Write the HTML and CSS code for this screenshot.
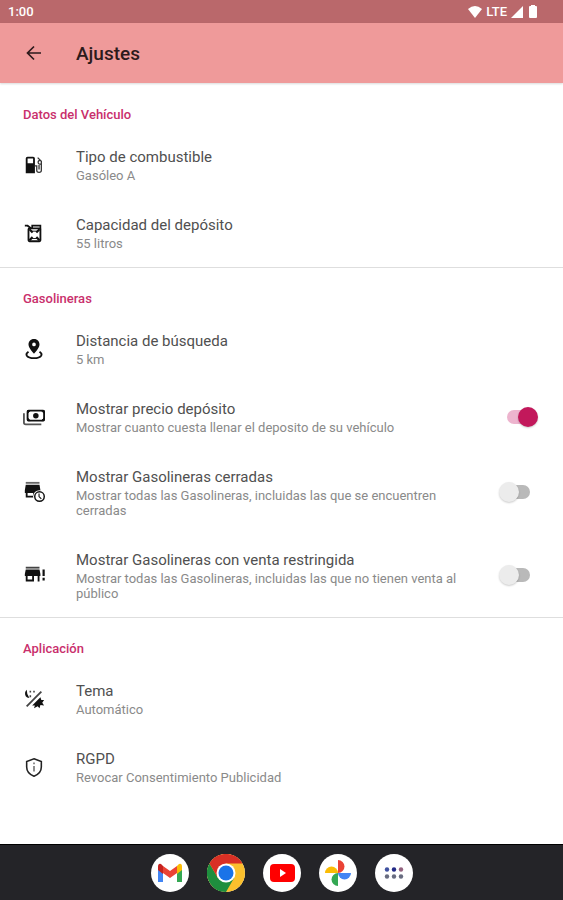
FILE: index.html
```html
<!DOCTYPE html>
<html lang="es">
<head>
    <meta charset="utf-8">
    <meta name="viewport" content="width=device-width, initial-scale=1">
    <title>Ajustes</title>
    <link rel="stylesheet" href="styles.css">
</head>
<body>
    <div class="status-bar">
        <span class="clock">1:00</span>
        <div class="status-icons">
            <svg width="14" height="12" viewBox="0 0 14 12"><path d="M0 3Q7-3 14 3L7 12Z"/></svg>
            <span>LTE</span>
            <svg width="12" height="12" viewBox="0 0 12 12"><path d="M12 0V12H0Z"/></svg>
            <svg class="battery" width="8" height="13" viewBox="0 0 8 13"><path d="M2 0H6V1H7Q8 1 8 2V12Q8 13 7 13H1Q0 13 0 12V2Q0 1 1 1H2Z"/></svg>
        </div>
    </div>
    <header class="app-bar">
        <button class="back" type="button" aria-label="Atrás">
            <svg width="16" height="16" viewBox="0 0 16 16"><path d="M15 8H2M8 1.500L1.500 8L8 14.500" fill="none" stroke="#2d1a1c" stroke-width="1.700"/></svg>
        </button>
        <h1>Ajustes</h1>
    </header>

    <main>
        <section>
            <h2>Datos del Vehículo</h2>
            <button class="row" type="button">
                <svg class="icon" viewBox="0 0 24 24">
                    <path fill-rule="evenodd" d="M5 3H11Q13 3 13 5V21H3V5Q3 3 5 3ZM5 5V10H11V5Z"/>
                    <path d="M13 13H15V18Q15 20 17.500 20Q20 20 20 18V8L16 4M20 11H18Q16.500 11 16.500 9Q16.500 7 19 7M17.500 12V17" fill="none" stroke="#333" stroke-width="1.400"/>
                </svg>
                <span class="text">
                    <span class="title">Tipo de combustible</span>
                    <span class="summary">Gasóleo A</span>
                </span>
            </button>
            <button class="row" type="button">
                <svg class="icon" viewBox="0 0 24 24">
                    <path d="M2 4H5L9 7" fill="none" stroke="#111" stroke-width="2"/>
                    <path d="M10 7V4H19V8" fill="none" stroke="#111" stroke-width="1.800"/>
                    <rect x="6" y="7" width="13" height="14" rx="1" fill="none" stroke="#111" stroke-width="2"/>
                    <path d="M7 8L10.500 11.500M18 8L14.500 11.500M7 20L10.500 16.500M18 20L14.500 16.500" stroke="#111" stroke-width="2.400"/>
                    <path d="M10 10H15M10 18H15" stroke="#111"/>
                </svg>
                <span class="text">
                    <span class="title">Capacidad del depósito</span>
                    <span class="summary">55 litros</span>
                </span>
            </button>
        </section>

        <section>
            <h2>Gasolineras</h2>
            <button class="row" type="button">
                <svg class="icon" viewBox="0 0 24 24">
                    <path fill-rule="evenodd" d="M12 1C8 1 6 4 6 7C6 11 12 17 12 17C12 17 18 11 18 7C18 4 16 1 12 1ZM12 5A2 2 0 1 1 12 9A2 2 0 1 1 12 5Z"/>
                    <path d="M6 15Q3 17 4 19Q6 22 12 22Q18 22 20 19Q21 17 18 15" fill="none" stroke="#111" stroke-width="2"/>
                </svg>
                <span class="text">
                    <span class="title">Distancia de búsqueda</span>
                    <span class="summary">5 km</span>
                </span>
            </button>
            <label class="row">
                <svg class="icon" viewBox="0 0 24 24">
                    <path d="M1 8V18Q1 20 3 20H20" fill="none" stroke="#555" stroke-width="2"/>
                    <rect x="5" y="5" width="18" height="11" rx="1" fill="none" stroke="#111" stroke-width="2"/>
                    <path d="M5 5H8L5 8ZM23 5H20L23 8ZM5 16H8L5 13ZM23 16H20L23 13Z" stroke="#111"/>
                    <circle cx="14" cy="10.500" r="3"/>
                </svg>
                <span class="text">
                    <span class="title">Mostrar precio depósito</span>
                    <span class="summary">Mostrar cuanto cuesta llenar el deposito de su vehículo</span>
                </span>
                <input class="switch" type="checkbox" checked>
            </label>
            <label class="row">
                <svg class="icon" viewBox="0 0 24 24">
                    <path d="M3 2H18" stroke="#666" stroke-width="2"/>
                    <path fill-rule="evenodd" d="M3 4H18L19 10V13H18V18H3V13H2V10ZM5 13V16H11V13Z"/>
                    <circle cx="18" cy="17" r="7" fill="#fff"/>
                    <circle cx="18" cy="17" r="5.200" fill="none" stroke="#111" stroke-width="1.600"/>
                    <path d="M17.500 13.500V17L20 19.500" fill="none" stroke="#111" stroke-width="1.200"/>
                </svg>
                <span class="text">
                    <span class="title">Mostrar Gasolineras cerradas</span>
                    <span class="summary">Mostrar todas las Gasolineras, incluidas las que se encuentren cerradas</span>
                </span>
                <input class="switch" type="checkbox">
            </label>
            <label class="row">
                <svg class="icon" viewBox="0 0 24 24">
                    <path d="M3 4H18" stroke="#444" stroke-width="2"/>
                    <path fill-rule="evenodd" d="M3 6H18L19 11V13H18V19H16V13H12V19H3V13H2V11ZM5 13V17H10V13Z"/>
                    <path d="M22.500 6V13M22.500 15V18" stroke="#111" stroke-width="2.400"/>
                </svg>
                <span class="text">
                    <span class="title">Mostrar Gasolineras con venta restringida</span>
                    <span class="summary">Mostrar todas las Gasolineras, incluidas las que no tienen venta al público</span>
                </span>
                <input class="switch" type="checkbox">
            </label>
        </section>

        <section>
            <h2>Aplicación</h2>
            <button class="row" type="button">
                <svg class="icon" viewBox="0 0 24 24">
                    <path d="M4 20L20 4" stroke="#444" stroke-width="2"/>
                    <path d="M4 2Q1 5 3 9Q4 11 7 11Q4 7 4 2Z"/>
                    <path d="M8 3V5M12 3V5M8 8V10" stroke="#444" stroke-width="1.700"/>
                    <path d="M10 19L19 10L20 13L23 13L21 16L23 19L19 18.500L18 22L16 20L12 22L13 19Z"/>
                </svg>
                <span class="text">
                    <span class="title">Tema</span>
                    <span class="summary">Automático</span>
                </span>
            </button>
            <button class="row" type="button">
                <svg class="icon" viewBox="0 0 24 24">
                    <path d="M12 3L20 6V12Q20 19 12 22Q4 19 4 12V6Z" fill="none" stroke="#222" stroke-width="1.700"/>
                    <path d="M12 7V9M12 11V17" stroke="#777" stroke-width="1.800"/>
                </svg>
                <span class="text">
                    <span class="title">RGPD</span>
                    <span class="summary">Revocar Consentimiento Publicidad</span>
                </span>
            </button>
        </section>
    </main>

    <nav class="dock">
        <button type="button" aria-label="Gmail">
            <svg viewBox="0 0 38 38">
                <path d="M7 13V28H12V17Z" fill="#4285f4"/>
                <path d="M31 13V28H26V17Z" fill="#34a853"/>
                <path d="M26 12L28 10Q31 9 31 13V16L26 20Z" fill="#fbbc04"/>
                <path d="M12 12L10 10Q7 9 7 13V16L12 20Z" fill="#c5221f"/>
                <path d="M12 12L19 17L26 12V19L19 24L12 19Z" fill="#ea4335"/>
            </svg>
        </button>
        <button type="button" aria-label="Chrome">
            <svg viewBox="0 0 38 38">
                <circle cx="19" cy="19" r="19" fill="#fbc02d"/>
                <path d="M19 19L10.800 23.700L2.500 9.500A19 19 0 0 0 19 38L27.200 23.700Z" fill="#1e8e3e"/>
                <path d="M2.500 9.500A19 19 0 0 1 35.500 9.500H19V19L10.800 23.700Z" fill="#d93025"/>
                <circle cx="19" cy="19" r="9.500" fill="#fff"/>
                <circle cx="19" cy="19" r="7.500" fill="#1a73e8"/>
            </svg>
        </button>
        <button type="button" aria-label="YouTube">
            <svg viewBox="0 0 38 38">
                <rect x="7" y="10" width="25" height="18" rx="4" fill="#f00"/>
                <path d="M17 15L23 19L17 23Z" fill="#fff"/>
            </svg>
        </button>
        <button type="button" aria-label="Fotos">
            <svg viewBox="0 0 38 38">
                <path d="M19 19V6A6.500 6.500 0 0 1 19 19Z" fill="#ea4335"/>
                <path d="M19 19H32A6.500 6.500 0 0 1 19 19Z" fill="#4285f4"/>
                <path d="M19 19V32A6.500 6.500 0 0 1 19 19Z" fill="#34a853"/>
                <path d="M19 19H6A6.500 6.500 0 0 1 19 19Z" fill="#fbbc04"/>
            </svg>
        </button>
        <button type="button" aria-label="Aplicaciones">
            <svg viewBox="0 0 38 38">
                <circle cx="12" cy="15.500" r="2.200" fill="#3f51a0"/>
                <circle cx="19" cy="15.500" r="2.200" fill="#232a86"/>
                <circle cx="26" cy="15.500" r="2.200" fill="#94637f"/>
                <circle cx="12" cy="22.500" r="2.200" fill="#686c80"/>
                <circle cx="19" cy="22.500" r="2.200" fill="#686c80"/>
                <circle cx="26" cy="22.500" r="2.200" fill="#686c80"/>
            </svg>
        </button>
    </nav>
</body>
</html>
```
FILE: styles.css
```css
* {
    box-sizing: border-box;
}
body {
    margin: 0;
    min-height: 100vh;
    display: flex;
    flex-direction: column;
    background-color: #fff;
    font-family: Roboto, "Liberation Sans", sans-serif;
}
button {
    border: none;
    padding: 0;
    background: none;
    font: inherit;
    cursor: pointer;
}
.status-bar {
    display: flex;
    justify-content: space-between;
    align-items: center;
    height: 23px;
    padding: 0 26px 0 8px;
    background-color: #ba686b;
    color: #fff;
    font-size: 13px;
    font-weight: 500;
}
.status-icons {
    display: flex;
    align-items: center;
    gap: 4px;
}
.status-icons svg {
    fill: #fff;
}
.battery {
    margin-left: 2px;
}
.app-bar {
    display: flex;
    align-items: center;
    height: 60px;
    padding-left: 24px;
    background-color: #ef9a9a;
    box-shadow: 0 1px 2px rgba(0, 0, 0, 0.15);
}
.back {
    display: flex;
    justify-content: center;
    width: 20px;
    margin-right: 32px;
}
h1 {
    margin: 0;
    font-size: 19px;
    font-weight: 500;
    color: #2d1a1c;
}
main {
    flex: 1;
}
section + section {
    border-top: 1px solid #dedede;
}
h2 {
    margin: 0;
    padding: 24px 23px 8px;
    font-size: 13px;
    line-height: 16px;
    font-weight: 500;
    color: #c92f6c;
}
section + section h2 {
    padding-top: 23px;
}
.row {
    display: flex;
    align-items: center;
    width: 100%;
    padding: 15px 25px 16px 23px;
    text-align: left;
    cursor: pointer;
}
.icon {
    flex: none;
    width: 22px;
    height: 22px;
    margin-right: 31px;
    fill: #111;
}
.text {
    flex: 1;
}
.title,
.summary {
    display: block;
}
.title {
    font-size: 15px;
    line-height: 22px;
    color: #505050;
}
.summary {
    font-size: 13px;
    line-height: 15px;
    color: #8a8a8a;
}
.switch {
    appearance: none;
    flex: none;
    position: relative;
    width: 39px;
    height: 20px;
    margin: 0 0 0 19px;
    cursor: pointer;
}
.switch::before {
    content: "";
    position: absolute;
    left: 8px;
    top: 3px;
    width: 23px;
    height: 14px;
    border-radius: 7px;
    background-color: #b9b9b9;
}
.switch::after {
    content: "";
    position: absolute;
    left: 0;
    top: 0;
    width: 20px;
    height: 20px;
    border-radius: 50%;
    background-color: #ececec;
    box-shadow: 0 1px 2px rgba(0, 0, 0, 0.2);
}
.switch:checked::before {
    background-color: #edb4ce;
}
.switch:checked::after {
    left: 19px;
    background-color: #c2185b;
}
.dock {
    display: flex;
    justify-content: center;
    align-items: center;
    gap: 18px;
    height: 56px;
    border-top: 1px solid #000;
    background-color: #242428;
}
.dock button {
    width: 38px;
    height: 38px;
    border-radius: 50%;
    background-color: #fff;
}
.dock svg {
    display: block;
}
```
